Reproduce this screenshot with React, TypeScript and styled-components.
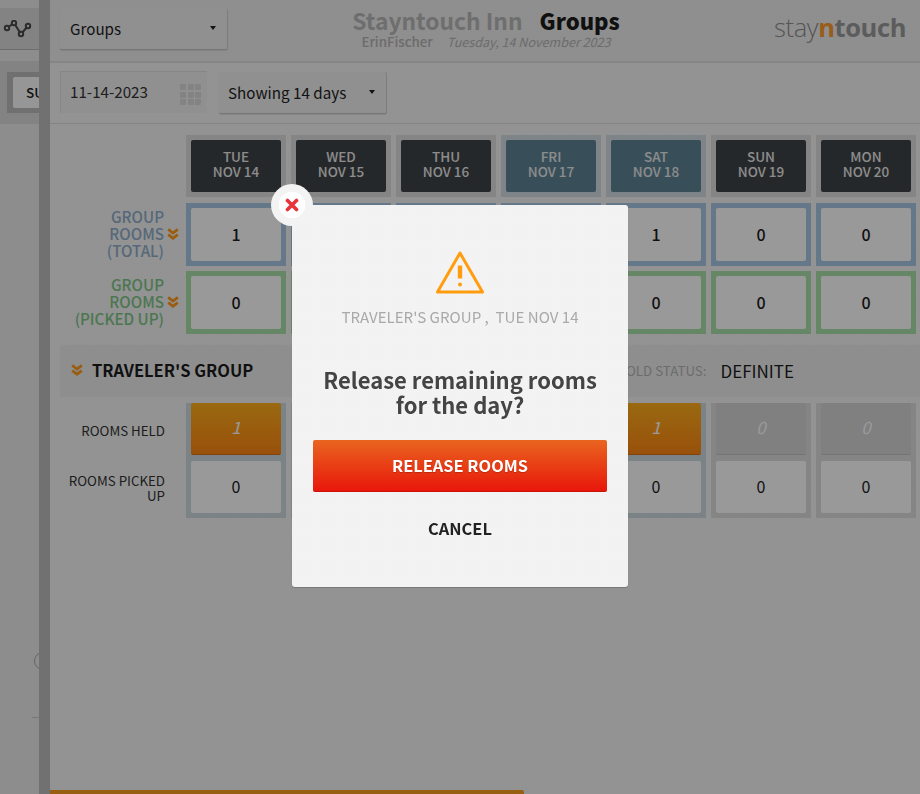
import React from 'react';
import styled, { createGlobalStyle } from 'styled-components';

const GlobalStyle = createGlobalStyle`
  html, body {
    margin: 0;
    padding: 0;
    height: 100%;
    overflow: hidden;
    background: #f5f5f5;
    font-family: "Noto Sans CJK JP", "Noto Sans", sans-serif;
    color: #1c1c1c;
  }
  * { box-sizing: border-box; }
`;

const texture = `radial-gradient(rgba(0, 0, 0, 0.012) 1px, transparent 1px)`;

const days = [
  { day: 'TUE', date: 'NOV 14', total: 1, picked: 0, held: 1 },
  { day: 'WED', date: 'NOV 15', total: 0, picked: 0, held: 0 },
  { day: 'THU', date: 'NOV 16', total: 0, picked: 0, held: 0 },
  { day: 'FRI', date: 'NOV 17', total: 0, picked: 0, held: 0, weekend: true },
  { day: 'SAT', date: 'NOV 18', total: 1, picked: 0, held: 1, weekend: true },
  { day: 'SUN', date: 'NOV 19', total: 0, picked: 0, held: 0 },
  { day: 'MON', date: 'NOV 20', total: 0, picked: 0, held: 0 },
];

function Chevrons({ size = 12 }: { size?: number }) {
  return (
    <svg width={size} height={size} viewBox="0 0 12 12" fill="none" stroke="#ff9a1c" strokeWidth="2.7">
      <path d="M1.2 1.4 6 5l4.8-3.6" />
      <path d="M1.2 6.6 6 10.2l4.8-3.6" />
    </svg>
  );
}

function App() {
  return (
    <Page>
      <GlobalStyle />
      <Sidebar>
        <SideTab>
          <svg width="29" height="18" viewBox="0 0 29 18" fill="none" stroke="#4a4a4a" strokeWidth="2">
            <path d="M4 8 11 3 18 14 25 6" />
            <circle cx="4" cy="8" r="2.2" fill="#dadada" />
            <circle cx="11" cy="3" r="2.2" fill="#dadada" />
            <circle cx="18" cy="14" r="2.2" fill="#dadada" />
            <circle cx="25" cy="6" r="2.2" fill="#dadada" />
          </svg>
        </SideTab>
        <SideBand>
          <SideFrame>
            <SideButton>SUMMARY</SideButton>
          </SideFrame>
        </SideBand>
        <SideArc />
        <SideRule />
      </Sidebar>
      <Divider />
      <Main>
        <Header>
          <Select>
            Groups
            <Caret />
          </Select>
          <TitleBlock>
            <TitleLine>
              Stayntouch Inn<strong>Groups</strong>
            </TitleLine>
            <SubLine>
              <b>ErinFischer</b>
              <i>Tuesday, 14 November 2023</i>
            </SubLine>
          </TitleBlock>
          <Logo>
            stay<LogoN>n</LogoN>
            <LogoBold>touch</LogoBold>
          </Logo>
        </Header>
        <FilterBar>
          <DateField>
            11-14-2023
            <CalendarGrid>
              {Array.from({ length: 9 }).map((_, i) => (
                <span key={i} />
              ))}
            </CalendarGrid>
          </DateField>
          <Select>
            Showing 14 days
            <Caret />
          </Select>
        </FilterBar>
        <Content>
          <StatsGrid>
            <span />
            {days.map((d) => (
              <HeadFrame key={d.day} $weekend={d.weekend}>
                <HeadTile $weekend={d.weekend}>
                  {d.day}
                  <br />
                  {d.date}
                </HeadTile>
              </HeadFrame>
            ))}
          </StatsGrid>
          <StatsRow>
            <RowLabel $color="#8fadca">
              <span>
                GROUP
                <br />
                ROOMS
                <br />
                (TOTAL)
              </span>
              <Chevrons />
            </RowLabel>
            {days.map((d) => (
              <CountFrame key={d.day} $color="#a9c9e4">
                <CountTile>{d.total}</CountTile>
              </CountFrame>
            ))}
          </StatsRow>
          <StatsRow>
            <RowLabel $color="#7ec686">
              <span>
                GROUP
                <br />
                ROOMS
                <br />
                (PICKED UP)
              </span>
              <Chevrons />
            </RowLabel>
            {days.map((d) => (
              <CountFrame key={d.day} $color="#a9e2ab">
                <CountTile>{d.picked}</CountTile>
              </CountFrame>
            ))}
          </StatsRow>
          <GroupBand>
            <Chevrons />
            <GroupName>TRAVELER'S GROUP</GroupName>
            <HoldStatus>
              <span>HOLD STATUS:</span>
              DEFINITE
            </HoldStatus>
          </GroupBand>
          <RoomsGrid>
            <RoomLabels>
              <SmallLabel>ROOMS HELD</SmallLabel>
              <SmallLabel>ROOMS PICKED UP</SmallLabel>
            </RoomLabels>
            {days.map((d) => (
              <RoomFrame key={d.day} $held={d.held > 0}>
                <HeldTile $held={d.held > 0}>{d.held}</HeldTile>
                <PickedTile>{d.picked}</PickedTile>
              </RoomFrame>
            ))}
          </RoomsGrid>
        </Content>
        <ProgressTrack>
          <ProgressFill />
        </ProgressTrack>
      </Main>
      <Overlay />
      <Modal>
        <CloseButton>
          <svg width="14" height="14" viewBox="0 0 14 14" stroke="#e8333a" strokeWidth="3.6" strokeLinecap="round">
            <path d="M2.5 2.5 11.5 11.5M11.5 2.5 2.5 11.5" />
          </svg>
        </CloseButton>
        <WarningIcon viewBox="0 0 48 43" fill="none" stroke="#ff9d0f" strokeWidth="3" strokeLinejoin="round">
          <path d="M24 2 46.5 41H1.5Z" />
          <path d="M24 14.5v13" strokeWidth="4.4" />
          <circle cx="24" cy="33.6" r="2" fill="#ff9d0f" stroke="none" />
        </WarningIcon>
        <ModalSub>TRAVELER'S GROUP ,&nbsp; TUE NOV 14</ModalSub>
        <ModalHeading>
          Release remaining rooms
          <br />
          for the day?
        </ModalHeading>
        <ReleaseButton>RELEASE ROOMS</ReleaseButton>
        <CancelButton>CANCEL</CancelButton>
      </Modal>
    </Page>
  );
}

export default App;

const Page = styled.div`
  display: flex;
  width: 920px;
  height: 794px;
  overflow: hidden;
`;

const Sidebar = styled.aside`
  position: relative;
  width: 39px;
  flex: none;
  overflow: hidden;
  background-color: #ececec;
  background-image: ${texture};
  background-size: 3px 3px;
`;

const SideTab = styled.div`
  height: 42px;
  margin-top: 8px;
  padding: 1px 0 0 3px;
  display: flex;
  align-items: center;
  background: #dadada;
  border-bottom: 1px solid #b4b4b4;
`;

const SideBand = styled.div`
  height: 63px;
  margin-top: 11px;
  padding-top: 11px;
  background: #dadada;
`;

const SideFrame = styled.div`
  height: 41px;
  margin-left: 7px;
  padding: 5px 0 0 6px;
  background: #bbbbbb;
`;

const SideButton = styled.div`
  width: 60px;
  height: 31px;
  padding-left: 13px;
  border-radius: 2px 0 0 2px;
  background: #fbfbfb;
  font-size: 13.5px;
  font-weight: 500;
  line-height: 30px;
  white-space: nowrap;
`;

const SideArc = styled.div`
  position: absolute;
  left: 34px;
  top: 652px;
  width: 18px;
  height: 18px;
  border: 1px solid #a8a8a8;
  border-radius: 50%;
`;

const SideRule = styled.div`
  position: absolute;
  left: 32px;
  top: 717px;
  width: 8px;
  height: 1px;
  background: #c8c8c8;
`;

const Divider = styled.div`
  width: 11px;
  flex: none;
  background: #bcbcbc;
`;

const Main = styled.main`
  position: relative;
  flex: 1;
  min-width: 0;
  display: flex;
  flex-direction: column;
`;

const Header = styled.header`
  height: 63px;
  flex: none;
  padding: 0 10px 2px 10px;
  display: grid;
  grid-template-columns: 1fr auto 1fr;
  align-items: center;
  background-color: #eeeeee;
  background-image: ${texture};
  background-size: 3px 3px;
  border-bottom: 2px solid #dedede;
  > div:first-child {
    padding-left: 10px;
  }
`;

const Select = styled.div`
  width: 168px;
  height: 41px;
  padding: 0 11px 2px 9px;
  display: flex;
  align-items: center;
  justify-content: space-between;
  font-size: 15.2px;
  color: #1e1e1e;
  background: #f0f0f0;
  border-radius: 2px;
  border-bottom: 1px solid #c4c4c4;
  border-right: 1px solid #d0d0d0;
  box-shadow: 0 1px 1px rgba(0, 0, 0, 0.08);
`;

const Caret = styled.span`
  width: 0;
  height: 0;
  border-left: 3px solid transparent;
  border-right: 3px solid transparent;
  border-top: 4px solid #1e1e1e;
`;

const TitleBlock = styled.div`
  margin: 0 0 3px 2px;
  text-align: center;
  white-space: nowrap;
`;

const TitleLine = styled.div`
  font-size: 22.8px;
  line-height: 26px;
  font-weight: 700;
  color: #b8b8b8;
  strong {
    margin-left: 17px;
    font-size: 22px;
    color: #1c1c1c;
  }
`;

const SubLine = styled.div`
  font-size: 13.3px;
  line-height: 16px;
  color: #b4b4b4;
  b {
    font-weight: 500;
    margin-right: 14px;
  }
  i {
    font-size: 12.6px;
    font-weight: 400;
    font-style: italic;
  }
`;

const Logo = styled.div`
  justify-self: end;
  margin-right: 4px;
  font-family: "Open Sans", sans-serif;
  font-size: 25.5px;
  font-weight: 300;
  letter-spacing: -0.4px;
  line-height: 30px;
  padding-bottom: 5px;
  color: #8f8f8f;
`;

const LogoN = styled.span`
  font-weight: 700;
  color: #ff9a2e;
`;

const LogoBold = styled.span`
  font-weight: 700;
  color: #9a9a9a;
`;

const FilterBar = styled.div`
  height: 61px;
  flex: none;
  padding: 8px 10px 0;
  display: flex;
  align-items: flex-start;
  gap: 12px;
  background: #f5f5f5;
  border-bottom: 1px solid #dcdcdc;
  > div:last-child {
    margin-top: 1px;
    height: 42px;
  }
`;

const DateField = styled.div`
  width: 147px;
  height: 42px;
  padding: 0 6px 4px 9px;
  display: flex;
  align-items: center;
  justify-content: space-between;
  font-size: 15.2px;
  color: #333;
  background: #f0f0f0;
  border-top: 1px solid #e0e0e0;
  border-left: 1px solid #e0e0e0;
`;

const CalendarGrid = styled.div`
  display: grid;
  grid-template-columns: repeat(3, 6px);
  grid-auto-rows: 6px;
  gap: 1.5px;
  margin-top: 8px;
  span {
    background: #dadada;
    border-radius: 1px;
  }
`;

const Content = styled.div`
  flex: 1;
  padding: 11px 0 0 10px;
  background-image: ${texture};
  background-size: 3px 3px;
`;

const StatsGrid = styled.div`
  display: grid;
  grid-template-columns: 121px repeat(7, 100px);
  column-gap: 5px;
`;

const StatsRow = styled(StatsGrid)`
  margin-top: 5px;
  &:nth-child(2) {
    margin-top: 6px;
  }
`;

const HeadFrame = styled.div<{ $weekend?: boolean }>`
  height: 62px;
  padding: 5px;
  background: ${(p) => (p.$weekend ? '#d2dde2' : '#dedede')};
`;

const HeadTile = styled.div<{ $weekend?: boolean }>`
  height: 100%;
  padding-top: 9px;
  border-radius: 2px;
  background: ${(p) => (p.$weekend ? '#5e8496' : '#3f4346')};
  color: #eaeaea;
  font-size: 13.5px;
  font-weight: 500;
  line-height: 15px;
  text-align: center;
`;

const RowLabel = styled.div<{ $color: string }>`
  padding: 0 2px 2px 0;
  display: flex;
  align-items: center;
  justify-content: flex-end;
  gap: 3px;
  font-size: 15.2px;
  line-height: 17px;
  font-weight: 500;
  text-align: right;
  color: ${(p) => p.$color};
  span {
    white-space: nowrap;
  }
`;

const CountFrame = styled.div<{ $color: string }>`
  height: 63px;
  padding: 5px;
  background: ${(p) => p.$color};
`;

const CountTile = styled.div`
  height: 100%;
  padding-bottom: 2px;
  display: flex;
  align-items: center;
  justify-content: center;
  border-radius: 2px;
  background: #fff;
  font-size: 16px;
  font-weight: 500;
`;

const GroupBand = styled.div`
  margin-top: 11px;
  height: 52px;
  padding: 0 0 2px 11px;
  display: flex;
  align-items: center;
  gap: 9px;
  background: #ededed;
`;

const GroupName = styled.div`
  font-size: 16.5px;
  font-weight: 700;
  color: #1c1c1c;
`;

const HoldStatus = styled.div`
  margin-left: auto;
  margin-right: 126px;
  display: flex;
  align-items: center;
  gap: 14px;
  font-size: 17px;
  color: #1c1c1c;
  span {
    font-size: 13.3px;
    color: #b4b4b4;
  }
`;

const RoomsGrid = styled(StatsGrid)`
  margin-top: 6px;
`;

const RoomLabels = styled.div`
  padding-right: 16px;
  display: grid;
  grid-template-rows: 52px 52px;
  row-gap: 6px;
`;

const SmallLabel = styled.div`
  align-self: center;
  padding-top: 2px;
  font-size: 13.3px;
  line-height: 15px;
  text-align: right;
  color: #333;
`;

const RoomFrame = styled.div<{ $held: boolean }>`
  height: 115px;
  padding: 0 5px 5px;
  display: flex;
  flex-direction: column;
  gap: 6px;
  background: ${(p) => (p.$held ? '#cfdae2' : '#dedede')};
`;

const HeldTile = styled.div<{ $held: boolean }>`
  height: 52px;
  padding-bottom: 4px;
  display: flex;
  align-items: center;
  justify-content: center;
  border-radius: 2px;
  font-size: 17px;
  font-style: italic;
  color: #fff;
  background: ${(p) => (p.$held ? 'linear-gradient(#ffaf1c, #ff8713)' : '#d6d6d6')};
  border-bottom: 1px solid ${(p) => (p.$held ? '#d8700f' : '#c2c2c2')};
`;

const PickedTile = styled.div`
  height: 52px;
  padding-bottom: 3px;
  display: flex;
  align-items: center;
  justify-content: center;
  border-radius: 2px;
  background: #fff;
  font-size: 16px;
  color: #1c1c1c;
`;

const ProgressTrack = styled.div`
  position: absolute;
  left: 0;
  right: 0;
  bottom: 0;
  height: 4px;
`;

const ProgressFill = styled.div`
  width: 474px;
  height: 100%;
  border-radius: 0 2px 0 0;
  background: #fc9e1f;
`;

const Overlay = styled.div`
  position: fixed;
  inset: 0;
  background: rgba(0, 0, 0, 0.4);
`;

const Modal = styled.div`
  position: fixed;
  left: 292px;
  top: 205px;
  width: 336px;
  height: 382px;
  padding: 46px 21px 0;
  display: flex;
  flex-direction: column;
  align-items: center;
  background-color: #f3f3f3;
  background-image: ${texture};
  background-size: 3px 3px;
  border-radius: 3px;
  box-shadow: 0 1px 1px rgba(0, 0, 0, 0.2);
`;

const CloseButton = styled.div`
  position: absolute;
  left: -21px;
  top: -21px;
  width: 42px;
  height: 42px;
  display: flex;
  align-items: center;
  justify-content: center;
  border-radius: 50%;
  background: radial-gradient(circle, #ffffff 0 13px, #f3f3f3 13.5px);
`;

const WarningIcon = styled.svg`
  width: 48px;
  height: 43px;
  flex: none;
`;

const ModalSub = styled.div`
  margin-top: 11px;
  font-size: 15.1px;
  line-height: 22px;
  color: #a9a9a9;
  white-space: nowrap;
`;

const ModalHeading = styled.h2`
  margin: 40px 0 0;
  font-size: 22px;
  line-height: 25px;
  font-weight: 700;
  text-align: center;
  color: #444;
  white-space: nowrap;
`;

const ReleaseButton = styled.div`
  margin-top: 23px;
  width: 100%;
  height: 52px;
  padding-bottom: 2px;
  flex: none;
  display: flex;
  align-items: center;
  justify-content: center;
  border-radius: 2px;
  background: linear-gradient(#e9651f, #e8170b);
  border-bottom: 1px solid #c8140a;
  font-size: 16.4px;
  font-weight: 700;
  color: #fff;
  text-shadow: 0 1px 1px rgba(0, 0, 0, 0.2);
`;

const CancelButton = styled.div`
  margin-top: 23px;
  font-size: 16.4px;
  line-height: 26px;
  font-weight: 700;
  color: #222;
`;
